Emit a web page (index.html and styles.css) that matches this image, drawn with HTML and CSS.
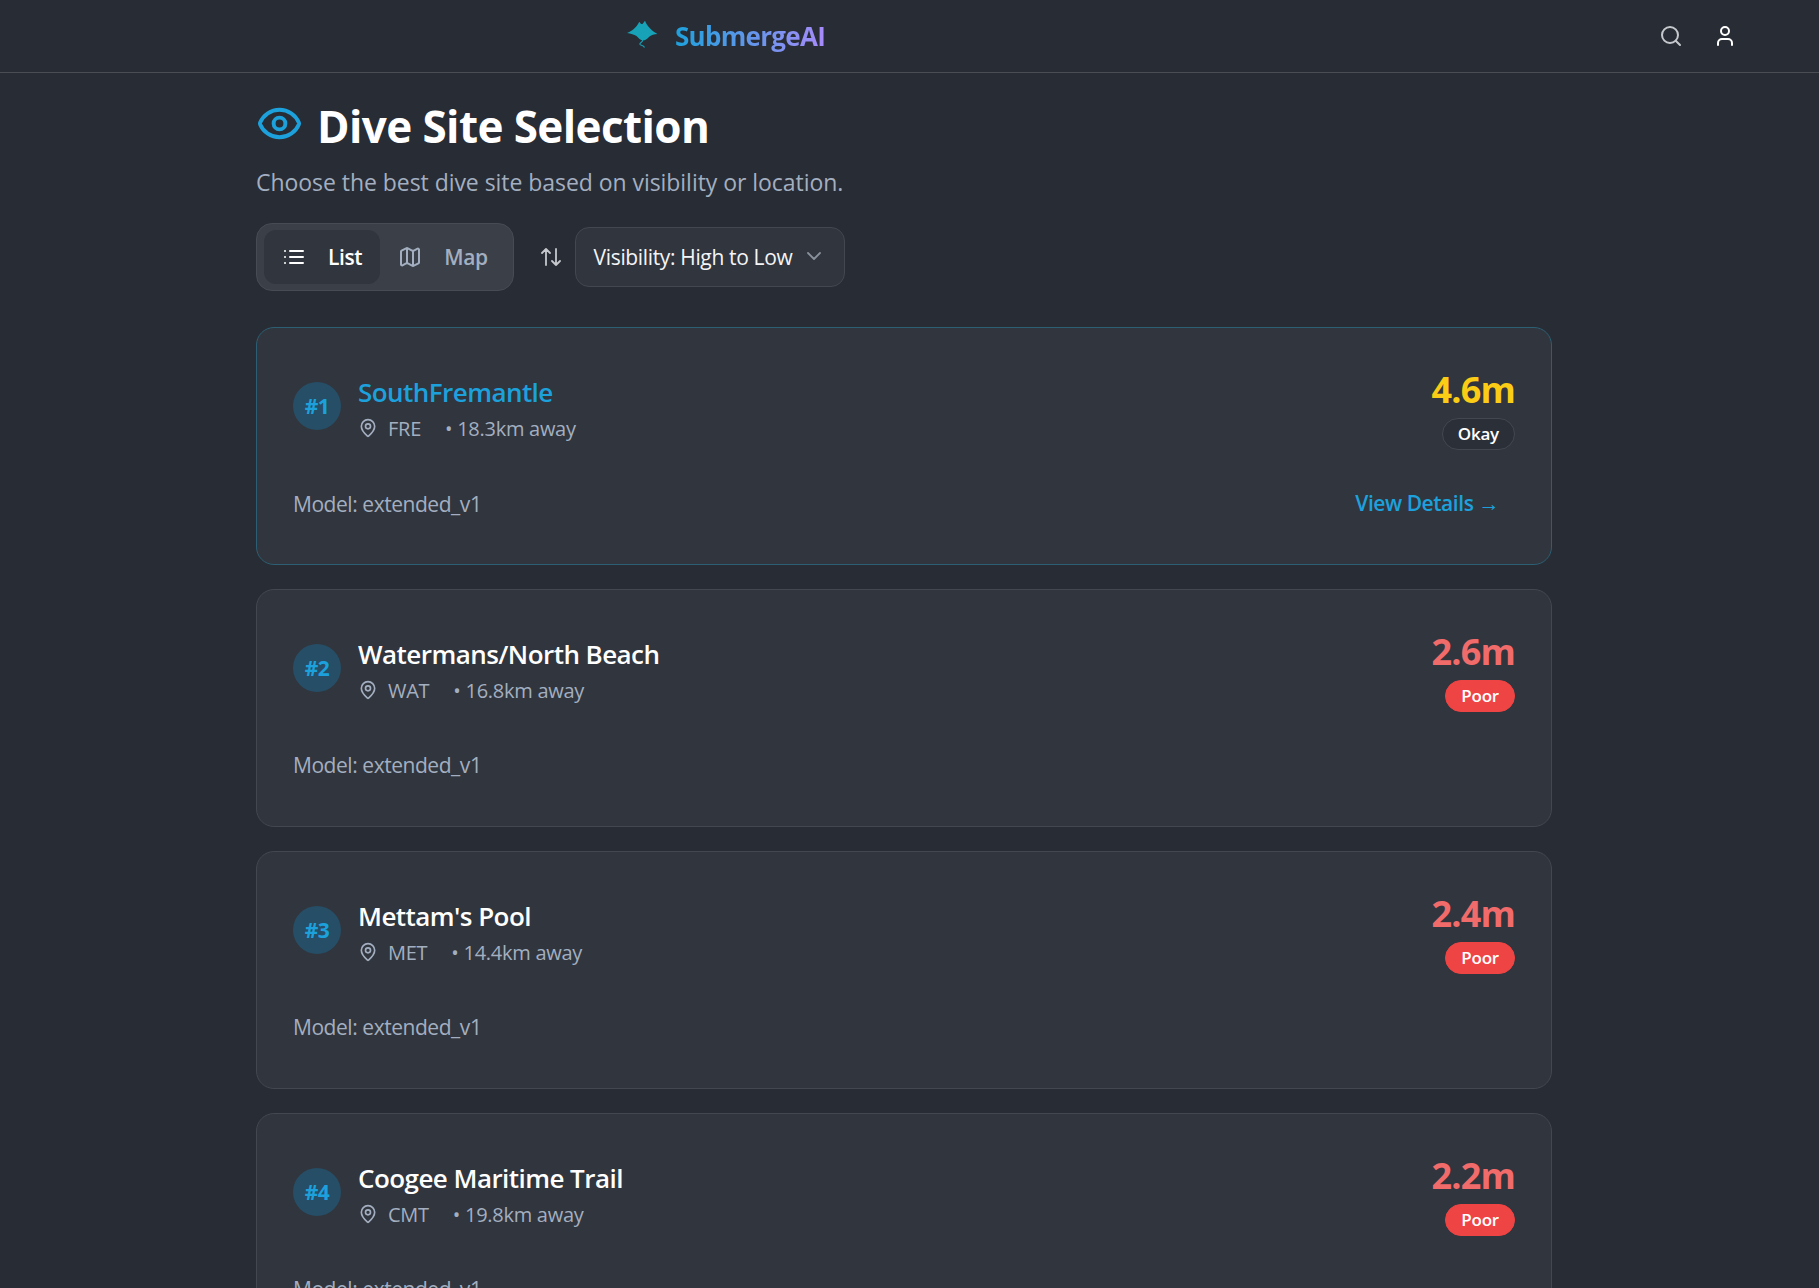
FILE: index.html
```html
<!DOCTYPE html>
<html lang="en">
<head>
    <meta charset="UTF-8">
    <meta name="viewport" content="width=device-width, initial-scale=1.0">
    <title>SubmergeAI - Dive Site Selection</title>
    <link rel="stylesheet" href="styles.css">
</head>
<body>

    <header class="topbar">
        <div class="brand">
            <svg class="manta" viewBox="0 0 31 28">
                <path class="manta-body" d="M0 13 C5 11 9 8 12.300 1.700 L14 4 L15.500 4 L18 .7 C20 6 25 11 30.500 14 C27 14.300 24.500 15 22.500 16.500 C20 19 18 20.500 16 20.500 C13.500 20.500 11.500 18 9.500 16 C7 14.500 4 13.500 0 13 Z"/>
                <path class="manta-tail" d="M15.500 20 C16.500 22 12 22.500 13 24.500 C13.800 25.500 16.500 25 17.500 27.500"/>
            </svg>
            <span class="brand-name">SubmergeAI</span>
        </div>
        <div class="topbar-icons">
            <svg class="icon icon-search" viewBox="0 0 24 24"><circle cx="11" cy="11" r="8"/><path d="m21 21-4.300-4.300"/></svg>
            <svg class="icon icon-user" viewBox="0 0 24 24"><path d="M19 21v-2a4 4 0 0 0-4-4H9a4 4 0 0 0-4 4v2"/><circle cx="12" cy="7" r="4"/></svg>
        </div>
    </header>

    <main class="container">
        <h1 class="page-title">
            <svg class="icon title-icon" viewBox="0 0 24 24"><path d="M2.062 12.348a1 1 0 0 1 0-.696 10.750 10.750 0 0 1 19.876 0 1 1 0 0 1 0 .696 10.750 10.750 0 0 1-19.876 0"/><circle cx="12" cy="12" r="3"/></svg>
            Dive Site Selection
        </h1>
        <p class="subtitle">Choose the best dive site based on visibility or location.</p>

        <div class="controls">
            <div class="view-tabs">
                <button type="button" class="tab active">
                    <svg class="icon" viewBox="0 0 24 24"><path d="M8 6h13M8 12h13M8 18h13M3 6h.01M3 12h.01M3 18h.01"/></svg>
                    List
                </button>
                <button type="button" class="tab">
                    <svg class="icon" viewBox="0 0 24 24"><path d="M14.106 5.553a2 2 0 0 0 1.788 0l3.659-1.830A1 1 0 0 1 21 4.619v12.764a1 1 0 0 1-.553.894l-4.553 2.277a2 2 0 0 1-1.788 0l-4.212-2.106a2 2 0 0 0-1.788 0l-3.659 1.830A1 1 0 0 1 3 19.381V6.618a1 1 0 0 1 .553-.894l4.553-2.277a2 2 0 0 1 1.788 0z"/><path d="M15 5.764v15M9 3.236v15"/></svg>
                    Map
                </button>
            </div>
            <svg class="icon sort-icon" viewBox="0 0 24 24"><path d="m21 16-4 4-4-4M17 20V4M3 8l4-4 4 4M7 4v16"/></svg>
            <div class="sort-select">
                Visibility: High to Low
                <svg class="icon chevron" viewBox="0 0 24 24"><path d="m6 9 6 6 6-6"/></svg>
            </div>
        </div>

        <div class="site-list">
            <article class="site-card selected">
                <div class="card-top">
                    <div class="rank">#1</div>
                    <div class="site-info">
                        <h3 class="site-name">SouthFremantle</h3>
                        <div class="site-meta">
                            <svg class="icon pin" viewBox="0 0 24 24"><path d="M20 10c0 4.993-5.539 10.193-7.399 11.799a1 1 0 0 1-1.202 0C9.539 20.193 4 14.993 4 10a8 8 0 0 1 16 0"/><circle cx="12" cy="10" r="3"/></svg>
                            <span class="site-code">FRE</span>
                            <span>• 18.3km away</span>
                        </div>
                    </div>
                    <div class="site-vis">
                        <div class="vis-value okay">4.6m</div>
                        <span class="vis-badge badge-okay">Okay</span>
                    </div>
                </div>
                <div class="card-bottom">
                    <span class="model">Model: extended_v1</span>
                    <a class="details-link" href="#">View Details <span class="arrow">→</span></a>
                </div>
            </article>

            <article class="site-card">
                <div class="card-top">
                    <div class="rank">#2</div>
                    <div class="site-info">
                        <h3 class="site-name">Watermans/North Beach</h3>
                        <div class="site-meta">
                            <svg class="icon pin" viewBox="0 0 24 24"><path d="M20 10c0 4.993-5.539 10.193-7.399 11.799a1 1 0 0 1-1.202 0C9.539 20.193 4 14.993 4 10a8 8 0 0 1 16 0"/><circle cx="12" cy="10" r="3"/></svg>
                            <span class="site-code">WAT</span>
                            <span>• 16.8km away</span>
                        </div>
                    </div>
                    <div class="site-vis">
                        <div class="vis-value poor">2.6m</div>
                        <span class="vis-badge badge-poor">Poor</span>
                    </div>
                </div>
                <div class="card-bottom">
                    <span class="model">Model: extended_v1</span>
                </div>
            </article>

            <article class="site-card">
                <div class="card-top">
                    <div class="rank">#3</div>
                    <div class="site-info">
                        <h3 class="site-name">Mettam's Pool</h3>
                        <div class="site-meta">
                            <svg class="icon pin" viewBox="0 0 24 24"><path d="M20 10c0 4.993-5.539 10.193-7.399 11.799a1 1 0 0 1-1.202 0C9.539 20.193 4 14.993 4 10a8 8 0 0 1 16 0"/><circle cx="12" cy="10" r="3"/></svg>
                            <span class="site-code">MET</span>
                            <span>• 14.4km away</span>
                        </div>
                    </div>
                    <div class="site-vis">
                        <div class="vis-value poor">2.4m</div>
                        <span class="vis-badge badge-poor">Poor</span>
                    </div>
                </div>
                <div class="card-bottom">
                    <span class="model">Model: extended_v1</span>
                </div>
            </article>

            <article class="site-card">
                <div class="card-top">
                    <div class="rank">#4</div>
                    <div class="site-info">
                        <h3 class="site-name">Coogee Maritime Trail</h3>
                        <div class="site-meta">
                            <svg class="icon pin" viewBox="0 0 24 24"><path d="M20 10c0 4.993-5.539 10.193-7.399 11.799a1 1 0 0 1-1.202 0C9.539 20.193 4 14.993 4 10a8 8 0 0 1 16 0"/><circle cx="12" cy="10" r="3"/></svg>
                            <span class="site-code">CMT</span>
                            <span>• 19.8km away</span>
                        </div>
                    </div>
                    <div class="site-vis">
                        <div class="vis-value poor">2.2m</div>
                        <span class="vis-badge badge-poor">Poor</span>
                    </div>
                </div>
                <div class="card-bottom">
                    <span class="model">Model: extended_v1</span>
                </div>
            </article>
        </div>
    </main>

</body>
</html>
```

FILE: styles.css
```css
html, body {
    height: 100%;
    overflow: hidden;
}
body {
    font-family: "Open Sans", "Noto Sans", Arial, sans-serif;
    background-color: #282c34;
    color: #fff;
    margin: 0;
}
.icon {
    width: 24px;
    height: 24px;
    fill: none;
    stroke: currentColor;
    stroke-width: 2;
    stroke-linecap: round;
    stroke-linejoin: round;
    flex-shrink: 0;
}

/* Top bar */
.topbar {
    height: 72px;
    border-bottom: 1px solid #4a4d54;
    display: flex;
    align-items: center;
    justify-content: space-between;
    padding: 0 82px 0 627px;
}
.brand {
    display: flex;
    align-items: center;
    gap: 17px;
}
.manta {
    width: 31px;
    height: 28px;
    margin-top: -4px;
}
.manta-body {
    fill: #17a2b8;
}
.manta-tail {
    fill: none;
    stroke: #17a2b8;
    stroke-width: 1.200;
}
.brand-name {
    font-size: 26px;
    font-weight: 700;
    letter-spacing: -0.7px;
    background: linear-gradient(90deg, #1da1dc, #a78bfa);
    -webkit-background-clip: text;
    background-clip: text;
    color: transparent;
}
.topbar-icons {
    display: flex;
    align-items: center;
    gap: 30px;
}
.icon-search {
    color: #c5c8cc;
}

/* Page heading */
.container {
    width: 1296px;
    margin-left: 256px;
}
.page-title {
    display: flex;
    align-items: center;
    gap: 14px;
    font-size: 44px;
    font-weight: 700;
    line-height: 56px;
    letter-spacing: -0.6px;
    margin: 25px 0 0;
}
.title-icon {
    width: 47px;
    height: 47px;
    color: #1da1dc;
    margin-top: -6px;
}
.subtitle {
    font-size: 23px;
    line-height: 32px;
    color: #a3afc0;
    margin: 12px 0 0;
    letter-spacing: -0.05px;
}

/* View toggle and sort */
.controls {
    display: flex;
    align-items: center;
    margin-top: 25px;
}
.view-tabs {
    display: flex;
    padding: 6px 7px;
    background: #3b3f48;
    border: 1px solid #474b54;
    border-radius: 16px;
}
.tab {
    display: flex;
    align-items: center;
    gap: 22px;
    height: 54px;
    padding: 0 18px;
    font-family: inherit;
    font-size: 21px;
    font-weight: 600;
    letter-spacing: -0.4px;
    color: #a3afc0;
    background: none;
    border: none;
    border-radius: 12px;
}
.tab.active {
    color: #fff;
    background: #31353d;
}
.sort-icon {
    width: 24px;
    height: 24px;
    margin-left: 25px;
    color: #c5c8cc;
    stroke-width: 1.800;
}
.sort-select {
    display: flex;
    align-items: center;
    justify-content: space-between;
    width: 270px;
    height: 60px;
    box-sizing: border-box;
    margin-left: 12px;
    padding: 0 18px 0 18px;
    font-size: 21px;
    letter-spacing: -0.35px;
    color: #f3f4f6;
    background: #31353d;
    border: 1px solid #434750;
    border-radius: 14px;
}
.chevron {
    width: 24px;
    height: 24px;
    stroke-width: 1.800;
    color: #8a919c;
    margin-top: -3px;
}

/* Site cards */
.site-list {
    display: flex;
    flex-direction: column;
    gap: 24px;
    margin-top: 36px;
}
.site-card {
    box-sizing: border-box;
    height: 238px;
    padding: 46px 36px 0;
    background: #31353d;
    border: 1px solid #434750;
    border-radius: 18px;
}
.site-card.selected {
    border-color: #2c5f74;
}
.card-top {
    display: flex;
    align-items: flex-start;
}
.rank {
    width: 48px;
    height: 48px;
    margin-top: 8px;
    border-radius: 50%;
    background: #264e66;
    color: #1da1dc;
    font-size: 21px;
    font-weight: 700;
    line-height: 48px;
    letter-spacing: -0.5px;
    text-align: center;
    flex-shrink: 0;
}
.site-info {
    flex: 1;
    margin-left: 17px;
}
.site-name {
    font-size: 26px;
    font-weight: 600;
    line-height: 36px;
    letter-spacing: -0.55px;
    margin: 0;
}
.selected .site-name {
    color: #1da1dc;
}
.site-meta {
    display: flex;
    align-items: center;
    margin-top: 1px;
    font-size: 20px;
    line-height: 36px;
    letter-spacing: -0.27px;
    color: #a3afc0;
}
.pin {
    width: 20px;
    height: 20px;
    margin-right: 10px;
    margin-top: -2px;
}
.site-code {
    margin-right: 24px;
}
.site-vis {
    display: flex;
    flex-direction: column;
    align-items: flex-end;
    margin-top: -4px;
}
.vis-value {
    font-size: 36px;
    font-weight: 700;
    line-height: 40px;
    letter-spacing: -0.8px;
}
.okay {
    color: #facc15;
}
.poor {
    color: #f26b6b;
}
.vis-badge {
    box-sizing: border-box;
    height: 32px;
    margin-top: 8px;
    padding: 0 15px;
    font-size: 17px;
    font-weight: 600;
    line-height: 30px;
    letter-spacing: -0.2px;
    border-radius: 16px;
}
.badge-okay {
    color: #fff;
    background: #2b2f37;
    border: 1px solid #434750;
}
.badge-poor {
    color: #fff;
    background: #ef4444;
    border: 1px solid #ef4444;
}
.card-bottom {
    display: flex;
    align-items: center;
    justify-content: space-between;
    margin-top: 37px;
    padding-right: 16px;
    font-size: 21px;
    line-height: 32px;
    letter-spacing: -0.45px;
}
.model {
    color: #a3afc0;
}
.details-link {
    color: #1da1dc;
    font-weight: 600;
    text-decoration: none;
}
.arrow {
    font-family: "Liberation Sans", sans-serif;
    font-weight: 400;
}
```
